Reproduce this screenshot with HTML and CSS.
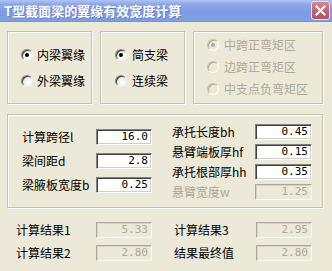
FILE: index.html
```html
<!DOCTYPE html>
<html>
<head>
<meta charset="utf-8">
<link rel="stylesheet" href="styles.css">
</head>
<body>
<div class="window">
  <div class="titlebar">
    <span class="title">T型截面梁的翼缘有效宽度计算</span>
    <span class="close"><svg width="11" height="11" viewBox="0 0 11 11"><path d="M1.5 1.5 L9.5 9.5 M9.5 1.5 L1.5 9.5" stroke="#fff" stroke-width="2" stroke-linecap="square"/></svg></span>
  </div>
  <div class="groups">
    <div class="group g1">
      <div class="opt"><span class="radio on"></span><span>内梁翼缘</span></div>
      <div class="opt"><span class="radio"></span><span>外梁翼缘</span></div>
    </div>
    <div class="group g2">
      <div class="opt"><span class="radio on"></span><span>简支梁</span></div>
      <div class="opt"><span class="radio"></span><span>连续梁</span></div>
    </div>
    <div class="group g3">
      <div class="opt dis"><span class="radio on"></span><span>中跨正弯矩区</span></div>
      <div class="opt dis"><span class="radio"></span><span>边跨正弯矩区</span></div>
      <div class="opt dis"><span class="radio"></span><span>中支点负弯矩区</span></div>
    </div>
  </div>
  <div class="group params">
    <div class="col left">
      <div class="row"><span class="lbl">计算跨径l</span><span class="field">16.0</span></div>
      <div class="row"><span class="lbl">梁间距d</span><span class="field">2.8</span></div>
      <div class="row"><span class="lbl">梁腋板宽度b</span><span class="field">0.25</span></div>
    </div>
    <div class="col right">
      <div class="row"><span class="lbl">承托长度bh</span><span class="field">0.45</span></div>
      <div class="row"><span class="lbl">悬臂端板厚hf</span><span class="field">0.15</span></div>
      <div class="row"><span class="lbl">承托根部厚hh</span><span class="field">0.35</span></div>
      <div class="row dis"><span class="lbl">悬臂宽度w</span><span class="field off">1.25</span></div>
    </div>
  </div>
  <div class="results">
    <div class="col rleft">
      <div class="row"><span class="lbl">计算结果1</span><span class="field off">5.33</span></div>
      <div class="row"><span class="lbl">计算结果2</span><span class="field off">2.80</span></div>
    </div>
    <div class="col rright">
      <div class="row"><span class="lbl">计算结果3</span><span class="field off">2.95</span></div>
      <div class="row"><span class="lbl">结果最终值</span><span class="field off">2.80</span></div>
    </div>
  </div>
</div>
</body>
</html>
```
FILE: styles.css
```css
html, body {
  margin: 0;
  padding: 0;
  background: #ece9d8;
}
.window {
  width: 332px;
  height: 271px;
  background: #ece9d8;
  font-family: "Noto Sans CJK SC", "Liberation Sans", sans-serif;
  font-size: 12px;
  color: #000;
  overflow: hidden;
}
.titlebar {
  height: 22px;
  box-sizing: border-box;
  display: flex;
  align-items: center;
  justify-content: space-between;
  padding: 0 2px 0 4px;
  background: linear-gradient(to bottom, #b0c4f2 0%, #8da7e8 20%, #7f9ae2 60%, #819de4 100%);
  border-bottom: 1px solid #7890d8;
}
.title {
  color: #fff;
  font-weight: bold;
  font-size: 13px;
  text-shadow: 1px 1px 0 #6a80c0;
}
.close {
  width: 19px;
  height: 19px;
  box-sizing: border-box;
  border: 1px solid #e8e0f0;
  border-radius: 3px;
  background: linear-gradient(to bottom, #d9858e, #c0606c 60%, #b35563);
  display: flex;
  align-items: center;
  justify-content: center;
}
.groups {
  display: flex;
  gap: 8px;
  padding: 9px 0 0 7px;
}
.group {
  box-sizing: border-box;
  border: 1px solid #c5c2b2;
  box-shadow: inset 1px 1px 0 #fff, 1px 1px 0 #fff;
}
.g1, .g2 {
  width: 85px;
  height: 73px;
  display: flex;
  flex-direction: column;
  gap: 12px;
  padding-top: 16px;
}
.g1 { padding-left: 13px; }
.g2 { padding-left: 14px; }
.g3 {
  width: 130px;
  height: 73px;
  display: flex;
  flex-direction: column;
  gap: 8px;
  padding: 6px 0 0 13px;
}
.opt {
  height: 14px;
  display: flex;
  align-items: center;
  gap: 5px;
  white-space: nowrap;
  line-height: 14px;
}
.g1 .opt { gap: 4px; }
.opt.dis { color: #aca899; }
.radio {
  width: 12px;
  height: 12px;
  box-sizing: border-box;
  border-radius: 50%;
  border: 1px solid;
  border-color: #808080 #f4f3ee #f4f3ee #808080;
  background: radial-gradient(circle at 65% 65%, #ffffff 0%, #f2f1ea 45%, #d6d3c6 100%);
  box-shadow: inset 1px 1px 0 #404040;
  position: relative;
  flex: none;
}
.radio.on::after {
  content: "";
  position: absolute;
  left: 3px;
  top: 3px;
  width: 4px;
  height: 4px;
  border-radius: 50%;
  background: #000;
}
.dis .radio {
  background: #ece9d8;
  border-color: #c5c2b2 #fff #fff #c5c2b2;
  box-shadow: inset 1px 1px 0 #aca899;
}
.dis .radio.on::after { background: #aca899; }
.params {
  margin: 10px 0 0 7px;
  width: 316px;
  height: 94px;
  display: flex;
}
.col {
  display: flex;
  flex-direction: column;
}
.left {
  width: 164px;
  box-sizing: border-box;
  padding: 14px 0 0 14px;
  gap: 8px;
}
.right {
  padding-top: 9px;
  gap: 4px;
}
.row {
  height: 16px;
  display: flex;
  align-items: center;
  white-space: nowrap;
}
.left .lbl { width: 74px; }
.right .lbl { width: 83px; }
.row.dis .lbl { color: #aca899; }
.lbl { line-height: 16px; }
.field {
  width: 56px;
  height: 16px;
  box-sizing: border-box;
  border: 1px solid;
  border-color: #808080 #fff #fff #808080;
  box-shadow: inset 1px 1px 0 #404040, inset -1px -1px 0 #d4d0c8;
  background: #fff;
  font-family: "DejaVu Sans Mono", "Liberation Mono", monospace;
  font-size: 11px;
  line-height: 14px;
  text-align: right;
  padding-right: 3px;
}
.right .field { width: 57px; }
.field.off {
  background: #ece9d8;
  color: #aca899;
  border-color: #aca899 #fff #fff #aca899;
  box-shadow: inset 1px 1px 0 #d6d3c4;
}
.results {
  display: flex;
  padding: 14px 0 0 16px;
}
.rleft {
  width: 158px;
  gap: 7px;
}
.rright { gap: 7px; }
.rleft .lbl { width: 80px; }
.rright .lbl { width: 82px; }
```
